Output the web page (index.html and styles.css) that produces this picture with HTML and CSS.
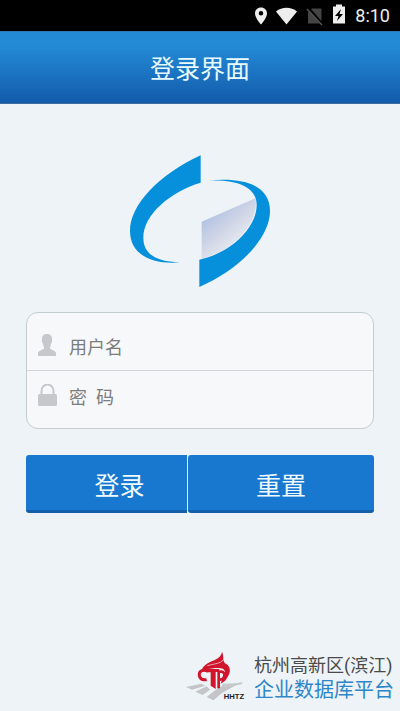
FILE: index.html
```html
<!DOCTYPE html>
<html lang="zh-CN">
<head>
    <meta charset="UTF-8">
    <meta name="viewport" content="width=device-width, initial-scale=1.0">
    <title>登录界面</title>
    <link rel="stylesheet" href="styles.css">
</head>
<body>
    <div class="status-bar">
        <svg class="status-icons" width="94" height="24" viewBox="0 0 94 24" aria-hidden="true">
            <path fill="#eee" fill-rule="evenodd" d="M8 3.500c-3.500 0-6 2.500-6 6C2 14 8 20.500 8 20.500S14 14 14 9.500c0-3.500-2.500-6-6-6zM8 7a2.300 2.300 0 1 1 0 4.600A2.300 2.300 0 0 1 8 7z"/>
            <path fill="#eee" d="M23 7.500C29 2.500 38 2.500 44 7.500L33.500 20.500z"/>
            <path fill="#444" d="M59 4.500h9.500v15H55v-11z"/>
            <path stroke="#000" stroke-width="3" d="M55 4l15 17"/>
            <path stroke="#555" stroke-width="1.500" d="M54 5l15 16"/>
            <path fill="#eee" d="M80 2.500h3V.5h6v2h3v17H80z"/>
            <path fill="#000" d="M88 5l-6 7h3.500l-1.500 5 6-7h-3.500z"/>
        </svg>
        <span class="time">8:10</span>
    </div>

    <header class="header">
        <h1>登录界面</h1>
    </header>

    <main class="container">
        <div class="logo">
            <svg width="140" height="132" viewBox="30 30 420 396" role="img" aria-label="Logo">
                <defs>
                    <linearGradient id="panel" x1="0" y1="0.200" x2="0.600" y2="1">
                        <stop offset="0" stop-color="#a5bce2"/>
                        <stop offset="0.500" stop-color="#d0d5e6"/>
                        <stop offset="1" stop-color="#f1f3f6"/>
                    </linearGradient>
                </defs>
                <path fill="url(#panel)" d="M245 230L406 160C418 220 360 310 245 341z"/>
                <path fill="#0690dc" d="M242 31V113C150 140 70 210 70 278C70 325 105 350 180 352C90 360 30 325 30 258C30 180 115 90 242 31z"/>
                <path fill="#0690dc" d="M265 107C370 96 450 120 450 198C450 275 365 370 238 426V344C330 325 410 250 410 180C410 130 360 103 265 107z"/>
            </svg>
        </div>

        <form id="loginForm">
            <div class="fields">
                <div class="field">
                    <label for="username" aria-label="用户名">
                        <svg width="20" height="24" viewBox="0 0 20 24" aria-hidden="true">
                            <path fill="#c6c8cb" d="M10 0c3.500 0 5 2 5 5 0 1 .3 1.500 0 3-.3 1-.8 1.200-1 2-.3 1.500-1 2.500-1 4 0 2 6 2.500 6 5v3H1v-3c0-2.500 6-3 6-5 0-1.500-.7-2.500-1-4-.2-.8-.7-1-1-2-.3-1.500 0-2 0-3 0-3 1.500-5 5-5z"/>
                        </svg>
                    </label>
                    <input type="text" id="username" name="username" placeholder="用户名">
                </div>
                <div class="field field-password">
                    <label for="password" aria-label="密码">
                        <svg width="20" height="24" viewBox="0 0 20 24" aria-hidden="true">
                            <path fill="none" stroke="#c6c8cb" stroke-width="2" d="M4.500 11V7a6 6.500 0 0 1 12 0v4"/>
                            <rect x="1" y="10" width="19" height="12" rx="1.500" fill="#c6c8cb"/>
                        </svg>
                    </label>
                    <input type="password" id="password" name="password" placeholder="密  码">
                </div>
            </div>
            <div class="buttons">
                <button type="submit" class="btn btn-login">登录</button>
                <button type="reset" class="btn">重置</button>
            </div>
        </form>
    </main>

    <footer class="footer">
        <svg width="60" height="52" viewBox="0 0 180 156" role="img" aria-label="HHTZ">
            <path fill="#c3c5c8" d="M0 108L46 98L58 104L18 116zM28 122L62 106L72 116L50 132zM62 138L100 108L172 92L144 106L108 126L82 148z"/>
            <path fill="#c8cacc" d="M110 98L168 96L168 100L106 110z"/>
            <path fill="#d0152d" d="M108 2C116 18 106 30 122 40C134 48 134 64 126 76C122 86 114 94 104 98L108 86C118 76 120 60 112 54C98 48 80 52 66 54C54 54 48 60 46 66C46 48 58 40 74 32C88 26 106 20 108 2z"/>
            <path fill="none" stroke="#edf3f6" stroke-width="2" d="M64 44C86 38 104 38 112 26"/>
            <path fill="none" stroke="#d0152d" stroke-width="9" d="M66 60C48 54 38 62 40 74C42 84 50 88 62 86"/>
            <path fill="#d0152d" d="M62 54H100L98 63H89V114L74 104V64H60z"/>
            <path fill="none" stroke="#d0152d" stroke-width="8" d="M98 112V62H106C120 62 118 86 100 86"/>
            <text class="logo-text" x="113" y="144">HHTZ</text>
        </svg>
        <div class="footer-text">
            <div class="district">杭州高新区(滨江)</div>
            <div class="platform">企业数据库平台</div>
        </div>
    </footer>
</body>
</html>
```
FILE: styles.css
```css
* {
    box-sizing: border-box;
}
body {
    font-family: Roboto, "Noto Sans CJK SC", sans-serif;
    background-color: #edf3f6;
    margin: 0;
    min-height: 100vh;
    display: flex;
    flex-direction: column;
}
.status-bar {
    display: flex;
    justify-content: flex-end;
    align-items: center;
    gap: 8px;
    height: 31px;
    padding: 0 10px;
    background-color: #000;
    color: #eee;
}
.time {
    font-size: 18px;
    line-height: 24px;
}
.header {
    height: 73px;
    padding-top: 2px;
    background: linear-gradient(#238ad6, #238ad6 20%, #135bab);
    border-top: 1px solid #3277ad;
    border-bottom: 1px solid #3c6da0;
    text-align: center;
}
.header h1 {
    margin: 0;
    color: #e8fbff;
    font-size: 25px;
    font-weight: 400;
    line-height: 72px;
}
.container {
    padding: 51px 26px 0;
}
.logo {
    margin-bottom: 25px;
}
.logo svg {
    display: block;
    margin: 0 auto;
}
.fields {
    background-color: #f6f8fa;
    border: 1px solid #c3cccf;
    border-radius: 12px;
}
.field {
    display: flex;
    align-items: center;
    gap: 12px;
    height: 58px;
    padding: 8px 12px 0 10px;
    border-bottom: 1px solid #d3d6d9;
}
.field-password {
    height: 57px;
    padding: 0 12px 8px 10px;
    border-bottom: none;
}
.field svg {
    display: block;
}
.field input {
    flex: 1;
    min-width: 0;
    padding: 4px 0 0;
    border: none;
    outline: none;
    background: transparent;
    font-family: inherit;
    font-size: 18px;
    line-height: 28px;
    color: #333;
}
.field input::placeholder {
    color: #7c7c7c;
}
.buttons {
    display: grid;
    grid-template-columns: 161fr 186fr;
    gap: 1px;
    margin-top: 26px;
}
.btn {
    height: 58px;
    padding: 2px 0 0;
    border: none;
    border-bottom: 3px solid #145fa9;
    border-radius: 3px;
    background-color: #1878d0;
    color: #f0fbff;
    font-family: inherit;
    font-size: 25px;
    cursor: pointer;
}
.btn-login {
    padding-left: 26px;
    border-top-right-radius: 0;
    border-bottom-right-radius: 0;
}
.footer {
    display: flex;
    justify-content: flex-end;
    align-items: center;
    gap: 8px;
    margin-top: auto;
    padding: 0 6px 8px 0;
}
.footer-text {
    width: 140px;
    padding-top: 2px;
    white-space: nowrap;
}
.district {
    color: #4a4a4a;
    font-size: 18px;
    line-height: 24px;
}
.platform {
    color: #2e86c8;
    font-size: 20px;
    line-height: 24px;
}
.logo-text {
    font-family: "Liberation Sans", sans-serif;
    font-size: 23px;
    font-weight: bold;
    fill: #222;
}
```
